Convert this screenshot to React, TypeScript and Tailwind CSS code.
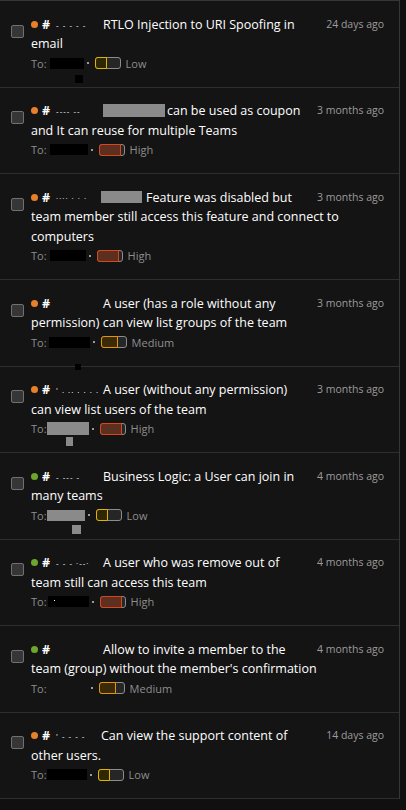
import React from "react";

type Sev = "Low" | "Medium" | "High";

interface Item {
  dot: string;
  mask: string;
  idW: string;
  pre?: React.ReactNode;
  lines: string[];
  time: string;
  toBox: React.ReactNode;
  sev: Sev;
  artifact?: React.ReactNode;
}

const ORANGE = "bg-[#e8802a]";
const GREEN = "bg-[#6ea52c]";

const BlackBox = ({ w = "w-[34px]", ml = "ml-[3px]", speck }: { w?: string; ml?: string; speck?: boolean }) => (
  <span className={`relative inline-block h-[11px] bg-black ${w} ${ml}`}>
    {speck && <span className="absolute left-[6px] top-[4px] h-[1px] w-[1px] bg-white" />}
  </span>
);
const GrayBox = ({ w = "w-[38px]", ml = "ml-0", h = "h-[11px]" }: { w?: string; ml?: string; h?: string }) => (
  <span className={`inline-block bg-[#8a8a8a] ${w} ${ml} ${h}`} />
);

const items: Item[] = [
  {
    dot: ORANGE,
    mask: "-  - - - -",
    idW: "w-[65px]",
    lines: ["RTLO Injection to URI Spoofing in", "email"],
    time: "24 days ago",
    toBox: <BlackBox w="w-[34px]" />,
    sev: "Low",
    artifact: <span className="absolute left-[75px] top-[74px] h-[8px] w-[8px] bg-black" />,
  },
  {
    dot: ORANGE,
    mask: "---- --",
    idW: "w-[65px]",
    pre: <span className="mr-[2px] inline-block h-[13px] w-[62px] bg-[#8a8a8a]" />,
    lines: ["can be used as coupon", "and It can reuse for multiple Teams"],
    time: "3 months ago",
    toBox: <BlackBox w="w-[38px]" />,
    sev: "High",
  },
  {
    dot: ORANGE,
    mask: "···· · · ·",
    idW: "w-[63px]",
    pre: <span className="mr-[4px] inline-block h-[12px] w-[41px] bg-[#8a8a8a]" />,
    lines: ["Feature was disabled but", "team member still access this feature and connect to", "computers"],
    time: "3 months ago",
    toBox: <BlackBox w="w-[36px]" />,
    sev: "High",
  },
  {
    dot: ORANGE,
    mask: "",
    idW: "w-[65px]",
    lines: ["A user (has a role without any", "permission) can view list groups of the team"],
    time: "3 months ago",
    toBox: <BlackBox w="w-[41px]" ml="ml-[2px]" />,
    sev: "Medium",
    artifact: <span className="absolute bottom-[-4px] left-[75px] z-10 h-[6px] w-[6px] bg-black" />,
  },
  {
    dot: ORANGE,
    mask: "' . .. . . . .",
    idW: "w-[65px]",
    lines: ["A user (without any permission)", "can view list users of the team"],
    time: "3 months ago",
    toBox: <GrayBox w="w-[42px]" h="h-[13px]" />,
    sev: "High",
    artifact: <span className="absolute left-[66px] top-[70px] h-[9px] w-[7px] bg-[#8a8a8a]" />,
  },
  {
    dot: GREEN,
    mask: "- --- -",
    idW: "w-[65px]",
    lines: ["Business Logic: a User can join in", "many teams"],
    time: "4 months ago",
    toBox: <GrayBox w="w-[38px]" />,
    sev: "Low",
    artifact: <span className="absolute left-[72px] top-[72px] h-[9px] w-[9px] bg-[#8a8a8a]" />,
  },
  {
    dot: GREEN,
    mask: "- - - ·--·",
    idW: "w-[65px]",
    lines: ["A user who was remove out of", "team still can access this team"],
    time: "4 months ago",
    toBox: <BlackBox w="w-[41px]" ml="ml-[1px]" speck />,
    sev: "High",
  },
  {
    dot: GREEN,
    mask: "",
    idW: "w-[65px]",
    lines: ["Allow to invite a member to the", "team (group) without the member's confirmation"],
    time: "4 months ago",
    toBox: <span className="inline-block h-[11px] w-[38px] ml-[3px]" />,
    sev: "Medium",
  },
  {
    dot: ORANGE,
    mask: "' - - - -",
    idW: "w-[63px]",
    lines: ["Can view the support content of", "other users."],
    time: "14 days ago",
    toBox: <BlackBox w="w-[40px]" ml="ml-0" />,
    sev: "Low",
  },
];

const sevStyle: Record<Sev, { w: string; cls: string }> = {
  Low: { w: "w-[12px]", cls: "border-[#e3b100] bg-[#2e2800]" },
  Medium: { w: "w-[17px]", cls: "border-[#e39400] bg-[#3b2a08]" },
  High: { w: "w-[22px]", cls: "border-[#d9461a] bg-[#5c2f20]" },
};

function SevBar({ sev }: { sev: Sev }) {
  const s = sevStyle[sev];
  return (
    <span className="relative inline-block h-[12px] w-[26px] rounded-[3px] border border-[#8c8c8c] bg-[#262626]">
      <span className={`absolute -left-px -top-px -bottom-px rounded-l-[3px] border ${s.w} ${s.cls}`} />
    </span>
  );
}

function Row({ it }: { it: Item }) {
  return (
    <div className="relative flex border-b border-[#2e2e2e] pb-[13.5px] pl-[11px] pr-[15px] pt-[13.5px]">
      <div className="mt-[10px] h-[13px] w-[13px] shrink-0 rounded-[2px] border border-[#707070] bg-[#363636]" />
      <div className="ml-[7px] min-w-0 flex-1 text-[12.5px] leading-[19.5px] text-white">
        <div className="flex h-[19.5px] items-center whitespace-nowrap">
          <span className={`h-[7px] w-[7px] shrink-0 rounded-full ${it.dot}`} />
          <span className={`flex shrink-0 items-center ${it.idW}`}>
            <span className="ml-[4px] font-bold">#</span>
            <span className="ml-[6px] text-[8px] tracking-[1px] text-white">{it.mask}</span>
          </span>
          {it.pre}
          <span>{it.lines[0]}</span>
        </div>
        {it.lines.slice(1).map((l, i) => (
          <div key={i} className="whitespace-nowrap">
            {l}
          </div>
        ))}
        <div className="flex h-[19.5px] items-center text-[11px] text-[#8e8e8e]">
          <span>To:</span>
          {it.toBox}
          <span className="ml-[3px] mr-[6px] h-[2px] w-[2px] bg-[#9a9a9a]" />
          <SevBar sev={it.sev} />
          <span className="ml-[5px]">{it.sev}</span>
        </div>
      </div>
      <div className="ml-[8px] shrink-0 whitespace-nowrap text-[10.5px] leading-[19.5px] text-[#9c9c9c]">{it.time}</div>
      {it.artifact}
    </div>
  );
}

export default function App() {
  return (
    <div
      className="min-h-[810px] w-[406px] bg-[#101010]"
      style={{ fontFamily: '"Open Sans", "Noto Sans", sans-serif' }}
    >
      <div className="w-[400px] border-r border-t border-[#363636] bg-[#141414]">
        {items.map((it, i) => (
          <Row key={i} it={it} />
        ))}
      </div>
    </div>
  );
}
